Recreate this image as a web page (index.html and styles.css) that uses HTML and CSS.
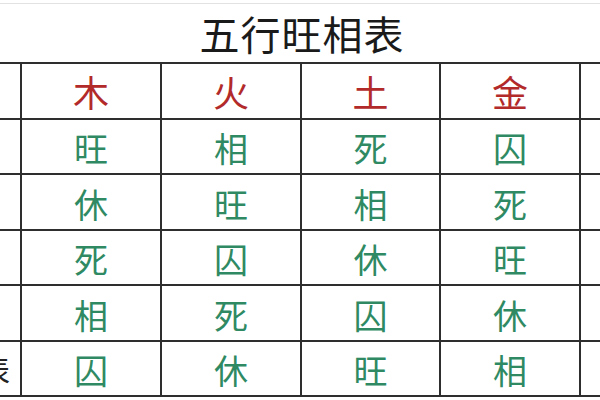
FILE: index.html
```html
<!DOCTYPE html>
<html lang="zh">
<head>
<meta charset="utf-8">
<link rel="stylesheet" href="styles.css">
</head>
<body>
<div class="sheet">
  <div class="title-row">
    <h1 class="title">五行旺相表</h1>
  </div>
  <div class="grid">
    <div class="cell side"></div>
    <div class="cell head">木</div>
    <div class="cell head">火</div>
    <div class="cell head">土</div>
    <div class="cell head">金</div>
    <div class="cell"></div>

    <div class="cell side"></div>
    <div class="cell body">旺</div>
    <div class="cell body">相</div>
    <div class="cell body">死</div>
    <div class="cell body">囚</div>
    <div class="cell"></div>

    <div class="cell side"></div>
    <div class="cell body">休</div>
    <div class="cell body">旺</div>
    <div class="cell body">相</div>
    <div class="cell body">死</div>
    <div class="cell"></div>

    <div class="cell side"></div>
    <div class="cell body">死</div>
    <div class="cell body">囚</div>
    <div class="cell body">休</div>
    <div class="cell body">旺</div>
    <div class="cell"></div>

    <div class="cell side"></div>
    <div class="cell body">相</div>
    <div class="cell body">死</div>
    <div class="cell body">囚</div>
    <div class="cell body">休</div>
    <div class="cell"></div>

    <div class="cell side"><span class="side-text">四季表</span></div>
    <div class="cell body">囚</div>
    <div class="cell body">休</div>
    <div class="cell body">旺</div>
    <div class="cell body">相</div>
    <div class="cell"></div>
  </div>
</div>
</body>
</html>
```

FILE: styles.css
```css
html, body {
  margin: 0;
  padding: 0;
  background: #ffffff;
}

.sheet {
  width: 600px;
  height: 400px;
  overflow: hidden;
  font-family: "Noto Sans CJK SC", "Noto Sans", sans-serif;
  background: #ffffff;
}

.title-row {
  height: 58px;
  margin-top: 3px;
  border-top: 1px solid #e2e2e2;
  display: flex;
  align-items: center;
  justify-content: center;
}

.title {
  margin: 0;
  padding-left: 4px;
  font-size: 40px;
  font-weight: 400;
  line-height: 1;
  color: #1a1a1a;
  letter-spacing: 1px;
}

.grid {
  display: grid;
  grid-template-columns: 20px 138px 138px 137px 138px 1fr;
  grid-auto-rows: 53.5px;
  gap: 2px;
  padding: 2px 0;
  background: #2e2e2e;
}

.cell {
  background: #ffffff;
  display: flex;
  align-items: center;
  justify-content: center;
  overflow: hidden;
}

.side {
  justify-content: flex-end;
}

.side-text {
  flex: none;
  font-size: 30px;
  color: #222;
  padding-right: 10px;
  white-space: nowrap;
}

.head {
  font-size: 36px;
  color: #b22a2a;
  line-height: 1;
}

.body {
  font-size: 34px;
  color: #2f8a63;
  line-height: 1;
  padding-top: 4px;
}
```
